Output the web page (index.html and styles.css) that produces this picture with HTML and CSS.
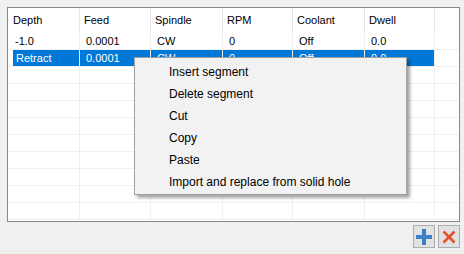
FILE: index.html
```html
<!DOCTYPE html>
<html lang="en">
<head>
  <meta charset="UTF-8">
  <title>Segments</title>
  <link rel="stylesheet" href="styles.css">
</head>
<body>
  <div class="grid">
    <div class="row head">
      <div class="cell">Depth</div>
      <div class="cell">Feed</div>
      <div class="cell">Spindle</div>
      <div class="cell">RPM</div>
      <div class="cell">Coolant</div>
      <div class="cell">Dwell</div>
      <div class="cell blank"></div>
    </div>
    <div class="row">
      <div class="cell">-1.0</div>
      <div class="cell">0.0001</div>
      <div class="cell">CW</div>
      <div class="cell">0</div>
      <div class="cell">Off</div>
      <div class="cell">0.0</div>
      <div class="cell blank"></div>
    </div>
    <div class="row selected">
      <div class="cell">Retract</div>
      <div class="cell">0.0001</div>
      <div class="cell">CW</div>
      <div class="cell">0</div>
      <div class="cell">Off</div>
      <div class="cell">0.0</div>
      <div class="cell blank"></div>
    </div>
    <div class="row empty"><div class="cell"></div><div class="cell"></div><div class="cell"></div><div class="cell"></div><div class="cell"></div><div class="cell"></div><div class="cell blank"></div></div>
    <div class="row empty"><div class="cell"></div><div class="cell"></div><div class="cell"></div><div class="cell"></div><div class="cell"></div><div class="cell"></div><div class="cell blank"></div></div>
    <div class="row empty"><div class="cell"></div><div class="cell"></div><div class="cell"></div><div class="cell"></div><div class="cell"></div><div class="cell"></div><div class="cell blank"></div></div>
    <div class="row empty"><div class="cell"></div><div class="cell"></div><div class="cell"></div><div class="cell"></div><div class="cell"></div><div class="cell"></div><div class="cell blank"></div></div>
    <div class="row empty"><div class="cell"></div><div class="cell"></div><div class="cell"></div><div class="cell"></div><div class="cell"></div><div class="cell"></div><div class="cell blank"></div></div>
    <div class="row empty"><div class="cell"></div><div class="cell"></div><div class="cell"></div><div class="cell"></div><div class="cell"></div><div class="cell"></div><div class="cell blank"></div></div>
    <div class="row empty"><div class="cell"></div><div class="cell"></div><div class="cell"></div><div class="cell"></div><div class="cell"></div><div class="cell"></div><div class="cell blank"></div></div>
    <div class="row empty"><div class="cell"></div><div class="cell"></div><div class="cell"></div><div class="cell"></div><div class="cell"></div><div class="cell"></div><div class="cell blank"></div></div>
    <div class="row empty"><div class="cell"></div><div class="cell"></div><div class="cell"></div><div class="cell"></div><div class="cell"></div><div class="cell"></div><div class="cell blank"></div></div>
  </div>

  <div class="toolbar">
    <button class="tool" title="Add segment">
      <svg width="16" height="16" viewBox="0 0 16 16">
        <rect x="6" y="0" width="4" height="16" fill="#3f7fc3"/>
        <rect x="0" y="6" width="16" height="4" fill="#3f7fc3"/>
      </svg>
    </button>
    <button class="tool" title="Remove segment">
      <svg width="14" height="14" viewBox="0 0 14 14">
        <path d="M1.5 1.5 L12.5 12.5 M12.5 1.5 L1.5 12.5" stroke="#e2502c" stroke-width="2.6"/>
      </svg>
    </button>
  </div>

  <ul class="menu">
    <li>Insert segment</li>
    <li>Delete segment</li>
    <li>Cut</li>
    <li>Copy</li>
    <li>Paste</li>
    <li>Import and replace from solid hole</li>
  </ul>
</body>
</html>
```

FILE: styles.css
```css
body {
  margin: 0;
  padding: 7px;
  background: #f0f0f0;
  font-family: "Liberation Sans", Arial, sans-serif;
  font-size: 11px;
  color: #000;
}
.grid {
  width: 453px;
  height: 215px;
  box-sizing: border-box;
  border: 1px solid #828790;
  background: #fff;
  overflow: hidden;
}
.row {
  display: grid;
  grid-template-columns: 72px 71px 72px 70px 72px 70px 1fr;
  height: 17px;
}
.cell {
  box-sizing: border-box;
  border-right: 1px solid #f0f0f0;
  border-bottom: 1px solid #f0f0f0;
  padding-left: 6px;
  line-height: 16px;
  white-space: nowrap;
  overflow: hidden;
}
.row .cell:first-child {
  padding-left: 7px;
}
.cell.blank {
  border-right: none;
}
.head {
  height: 25px;
}
.head .cell {
  border-bottom: none;
  border-right-color: #e5e5e5;
  line-height: 24px;
  padding-left: 4px;
}
.head .cell:first-child {
  padding-left: 5px;
}
.selected .cell {
  background: #0078d7;
  color: #fff;
}
.selected .cell:first-child {
  padding-left: 8px;
  background: linear-gradient(90deg, #fff 5px, #0078d7 5px);
}
.selected .cell.blank {
  background: #fff;
}
.toolbar {
  display: flex;
  justify-content: flex-end;
  gap: 3px;
  width: 453px;
  margin-top: 3px;
}
.tool {
  width: 22px;
  height: 23px;
  padding: 0;
  border: 1px solid #adadad;
  background: #e1e1e1;
  display: flex;
  align-items: center;
  justify-content: center;
}
.menu {
  position: absolute;
  left: 134px;
  top: 57px;
  width: 273px;
  margin: 0;
  padding: 3px 0 1px;
  box-sizing: border-box;
  list-style: none;
  background: #f2f2f2;
  border: 1px solid #a0a0a0;
  box-shadow: 3px 3px 3px rgba(0, 0, 0, 0.35);
  font-size: 12px;
}
.menu li {
  height: 22px;
  line-height: 22px;
  padding-left: 34px;
}
```
